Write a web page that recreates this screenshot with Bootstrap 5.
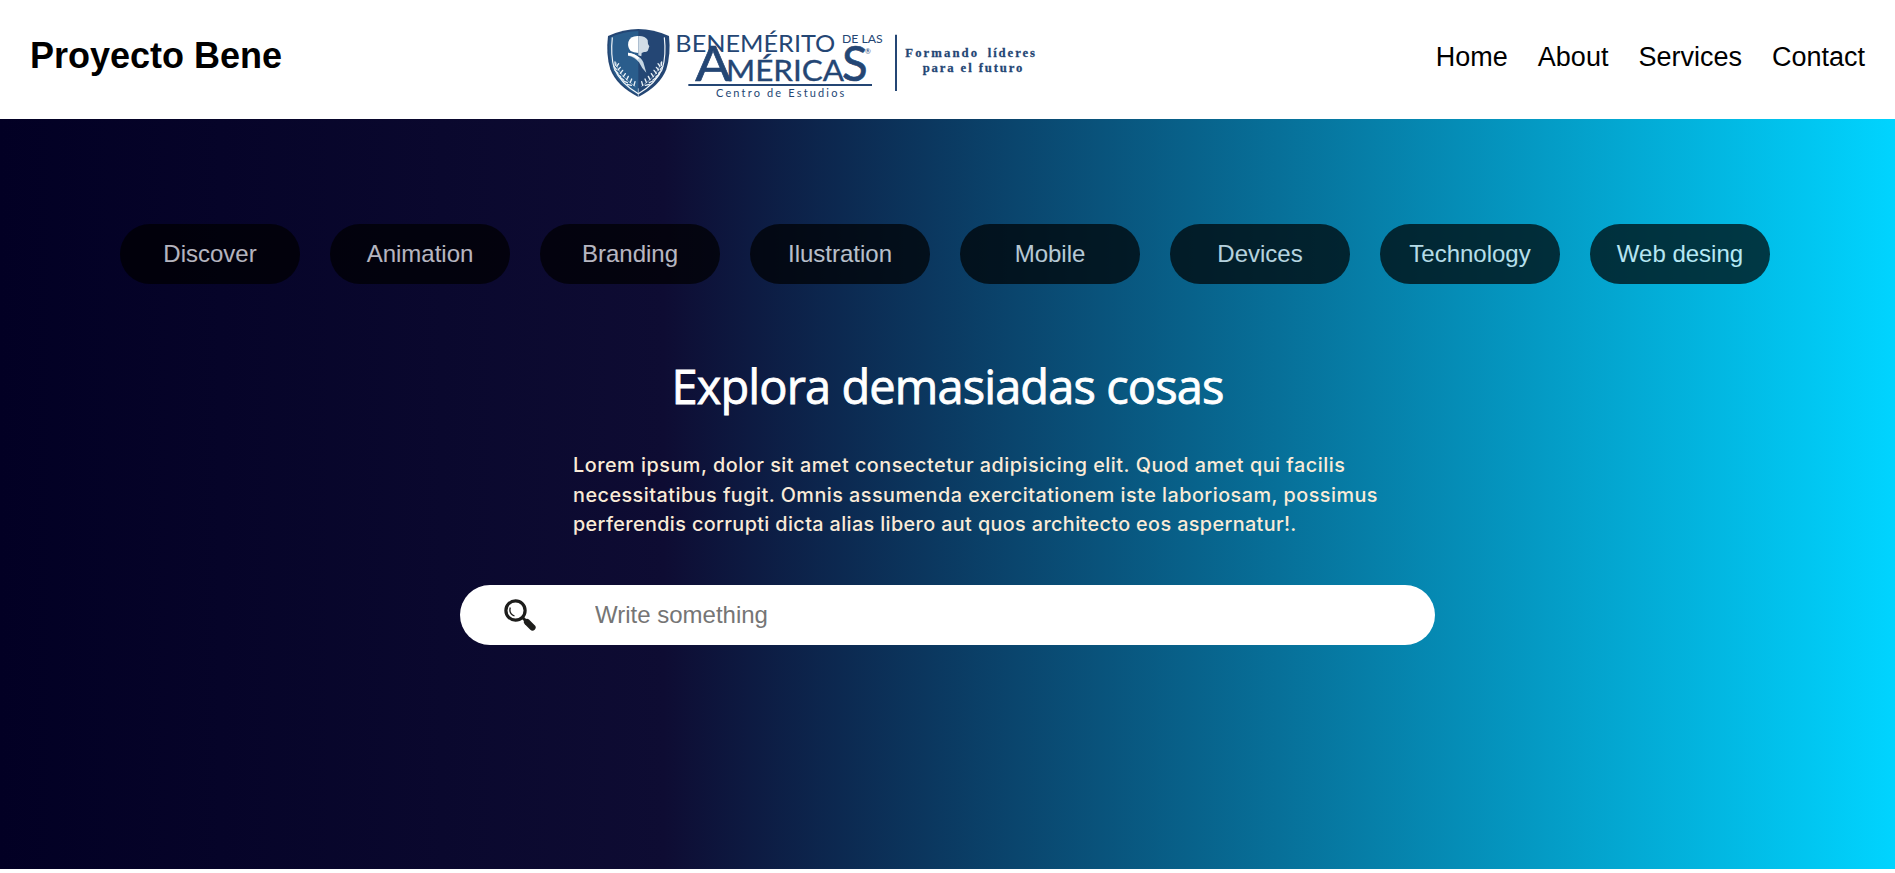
<!DOCTYPE html>
<html lang="es">
<head>
<meta charset="utf-8">
<meta name="viewport" content="width=device-width, initial-scale=1">
<title>Proyecto Bene</title>
<link href="https://cdn.jsdelivr.net/npm/bootstrap@5.3.0/dist/css/bootstrap.min.css" rel="stylesheet">
<style>
body{font-family:"Liberation Sans",Arial,sans-serif;color:#000;background:#fff;overflow:hidden}
.site-header{height:119px;padding:0 30px}
.site-title{font-size:36px;font-weight:700;line-height:41px;margin:35px 0 0;width:308px;white-space:nowrap}
.brand-logo{width:460px;height:110px;margin:15px 0 0 252px;display:block}
.site-menu{gap:30px;font-size:27px;line-height:31px;margin-top:42px}
.site-menu .nav-link{color:#000;padding:0}
.hero{height:750px;background:linear-gradient(90deg,#020024 0%,#0e0c33 35%,#00d4ff 100%);padding-top:105px}
.topics{gap:30px;margin-left:120px}
.topic{width:180px;height:60px;border-radius:30px;background:#000;color:#fff;opacity:.7;font-size:24px}
.hero-title{font-family:"Open Sans",sans-serif;font-size:47px;font-weight:400;letter-spacing:-.9px;-webkit-text-stroke:.8px #fff;line-height:60px;margin:72px 0 0;color:#fff;white-space:nowrap}
.hero-text{font-family:Inter,sans-serif;font-size:19.8px;font-weight:500;line-height:29.6px;color:#faebd7;width:810px;margin:35px 0 0 573px;white-space:nowrap}
.l1{letter-spacing:.52px}
.l2{letter-spacing:.48px}
.l3{letter-spacing:.38px}
.search{width:975px;height:60px;margin:45px auto 0;border-radius:30px;background:#fff;padding-left:42px}
.search svg{width:36px;height:36px;flex:none}
.search input{border:0;outline:0;background:none;font-size:24px;margin-left:57px;padding:0;width:780px;color:#000}
.search input::placeholder{color:#757575;opacity:1}
</style>
</head>
<body>
<header class="site-header d-flex align-items-start">
  <h1 class="site-title">Proyecto Bene</h1>
  <svg class="brand-logo" viewBox="0 0 1380 330" role="img" aria-label="Benemérito de las Américas">
    <g transform="translate(30 15)">
      <path d="M115 27Q70 27 24 48Q17 103 31 148Q50 198 115 231Q180 198 199 148Q213 103 207 48Q160 27 115 27Z" fill="#244674"/>
      <path d="M115 33Q72 33 29 53Q24 105 36 146Q54 194 115 225Z" fill="#2a5d8c"/>
      <path d="M37 52Q31 107 43 146Q62 190 115 221Q168 190 187 146Q199 107 193 52" fill="none" stroke="#f4f8fb" stroke-width="3.500"/>
      <path d="M115 48Q90 47 85 66Q82 82 92 93Q100 98 115 99Z" fill="#fff"/>
      <path d="M115 48Q135 47 143 60L144 72L148 79L145 88Q143 98 132 96L125 99L124 109L115 106Z" fill="#d0dce6"/>
      <path d="M84 98Q104 101 121 114Q127 120 130 127L139 158Q126 147 117 127Q104 110 84 107Z" fill="#c5d6e3"/>
      <path d="M84 98Q104 99 118 113L113 119Q100 107 84 106Z" fill="#fff"/>
      <g id="laurel" stroke="#e9f1f7" stroke-width="4" stroke-linecap="round" fill="none">
        <path d="M48 128Q54 165 105 199" stroke-width="1.5"/>
        <path d="M46 136L45 126M49 148L42 139M54 160L45 151M62 170L52 162M71 180L61 173M82 188L71 183M94 196L82 193M50 139L56 131M54 150L61 142M61 160L68 151M70 170L76 161M80 179L85 169M91 187L95 177M102 196L105 185"/>
      </g>
      <use href="#laurel" transform="translate(230 0) scale(-1 1)"/>
      <path d="M115 205V231" stroke="#dce8f0" stroke-width="2"/>
    </g>
    <g fill="#244674" font-family="Lato, sans-serif">
      <text x="256" y="110" font-size="68" textLength="480" lengthAdjust="spacingAndGlyphs">BENEMÉRITO</text>
      <text x="756" y="84" font-size="36" textLength="122" lengthAdjust="spacingAndGlyphs">DE LAS</text>
      <g stroke="#244674" stroke-width="2">
        <text x="316" y="198" font-size="143" textLength="107" lengthAdjust="spacingAndGlyphs">A</text>
        <text x="756" y="198" font-size="143" textLength="77" lengthAdjust="spacingAndGlyphs">S</text>
        <text x="408" y="198" font-size="86" textLength="354" lengthAdjust="spacingAndGlyphs" stroke-width="1">MÉRICA</text>
      </g>
      <text x="825" y="116" font-size="21">®</text>
      <path d="M295 207H846V213H295Z"/>
      <text x="378" y="246" font-size="33" textLength="385">Centro de Estudios</text>
      <path d="M915 59H921V228H915Z"/>
    </g>
    <g fill="#244674" font-family="Liberation Serif, serif" font-weight="700" font-size="38" stroke="#244674" stroke-width=".8">
      <text x="946" y="126" textLength="215">Formando</text>
      <text x="1193" y="126" textLength="142">líderes</text>
      <text x="998" y="171" textLength="299">para el futuro</text>
    </g>
  </svg>
  <nav class="site-menu nav ms-auto flex-nowrap">
    <a class="nav-link" href="#">Home</a>
    <a class="nav-link" href="#">About</a>
    <a class="nav-link" href="#">Services</a>
    <a class="nav-link" href="#">Contact</a>
  </nav>
</header>
<main class="hero">
  <div class="topics d-flex">
    <div class="topic d-flex align-items-center justify-content-center">Discover</div>
    <div class="topic d-flex align-items-center justify-content-center">Animation</div>
    <div class="topic d-flex align-items-center justify-content-center">Branding</div>
    <div class="topic d-flex align-items-center justify-content-center">Ilustration</div>
    <div class="topic d-flex align-items-center justify-content-center">Mobile</div>
    <div class="topic d-flex align-items-center justify-content-center">Devices</div>
    <div class="topic d-flex align-items-center justify-content-center">Technology</div>
    <div class="topic d-flex align-items-center justify-content-center">Web desing</div>
  </div>
  <h2 class="hero-title text-center">Explora demasiadas cosas</h2>
  <p class="hero-text"><span class="l1">Lorem ipsum, dolor sit amet consectetur adipisicing elit. Quod amet qui facilis</span><br><span class="l2">necessitatibus fugit. Omnis assumenda exercitationem iste laboriosam, possimus</span><br><span class="l3">perferendis corrupti dicta alias libero aut quos architecto eos aspernatur!.</span></p>
  <form class="search d-flex align-items-center">
    <svg viewBox="0 0 36 36" fill="none" stroke="#1d1d1b">
      <circle cx="13.5" cy="13.5" r="9.6" stroke-width="3.2"/>
      <path d="M8.300 10.500Q6.500 16.500 12.500 19" stroke-width="1.3"/>
      <path d="M20.500 20.500L24 24" stroke-width="3"/>
      <path d="M25 25L30.500 30.500" stroke-width="6.200" stroke-linecap="round"/>
    </svg>
    <input type="text" placeholder="Write something" aria-label="Write something">
  </form>
</main>
<script src="https://cdn.jsdelivr.net/npm/bootstrap@5.3.0/dist/js/bootstrap.bundle.min.js"></script>
</body>
</html>
